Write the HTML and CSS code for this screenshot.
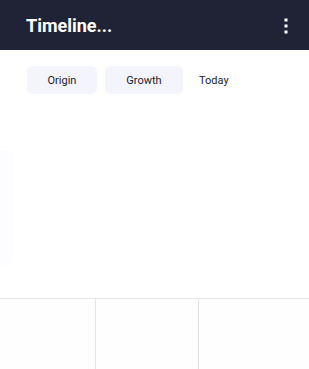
FILE: index.html
```html
<!DOCTYPE html>
<html>
<head>
<meta charset="utf-8">
<link rel="stylesheet" href="styles.css">
</head>
<body>
<div class="app">
  <header class="topbar">
    <h1 class="title">Timeline...</h1>
    <button class="menu" aria-label="More">
      <svg width="4" height="16" viewBox="0 0 4 16"><rect x="0.5" y="0.5" width="3" height="3" fill="#fff"/><rect x="0.5" y="6.5" width="3" height="3" fill="#fff"/><rect x="0.5" y="12.5" width="3" height="3" fill="#fff"/></svg>
    </button>
  </header>
  <nav class="tabs">
    <span class="tab pill origin">Origin</span>
    <span class="tab pill growth">Growth</span>
    <span class="tab plain">Today</span>
  </nav>
  <main class="stage">
    <div class="ghost-card"></div>
  </main>
  <section class="grid">
    <div class="cell"></div>
    <div class="cell"></div>
    <div class="cell"></div>
  </section>
</div>
</body>
</html>
```
FILE: styles.css
```css
* { box-sizing: border-box; }
html, body { margin: 0; padding: 0; background: #fff; }
body { font-family: Roboto, Inter, "Liberation Sans", sans-serif; }
.app { width: 309px; height: 369px; display: flex; flex-direction: column; overflow: hidden; }
.topbar { height: 50px; flex: none; background: #1f2335; display: flex; align-items: center; justify-content: space-between; padding: 0 21px 0 26px; }
.title { margin: 0; color: #fff; font-size: 18px; font-weight: 700; letter-spacing: 0; }
.menu { background: none; border: 0; padding: 0; width: 4px; height: 16px; display: flex; margin-top: 2px; }
.tabs { flex: none; display: flex; align-items: center; padding: 16px 0 0 27px; gap: 8px; }
.tab { height: 28px; display: flex; align-items: center; justify-content: center; font-size: 11px; color: #1c1e2a; }
.pill { background: #f4f4fd; border-radius: 5px; }
.origin { width: 70px; }
.growth { width: 78px; }
.plain { padding-left: 8px; }
.stage { flex: 1; display: flex; align-items: flex-start; padding-top: 56px; }
.ghost-card { width: 13px; height: 115px; background: #fdfdff; border-radius: 0 6px 6px 0; }
.grid { flex: none; height: 71px; display: grid; grid-template-columns: 95px 103px 1fr; border-top: 1px solid #e6e6e8; background: #fefefe; }
.cell + .cell { border-left: 1px solid #e4e4e6; }
```
